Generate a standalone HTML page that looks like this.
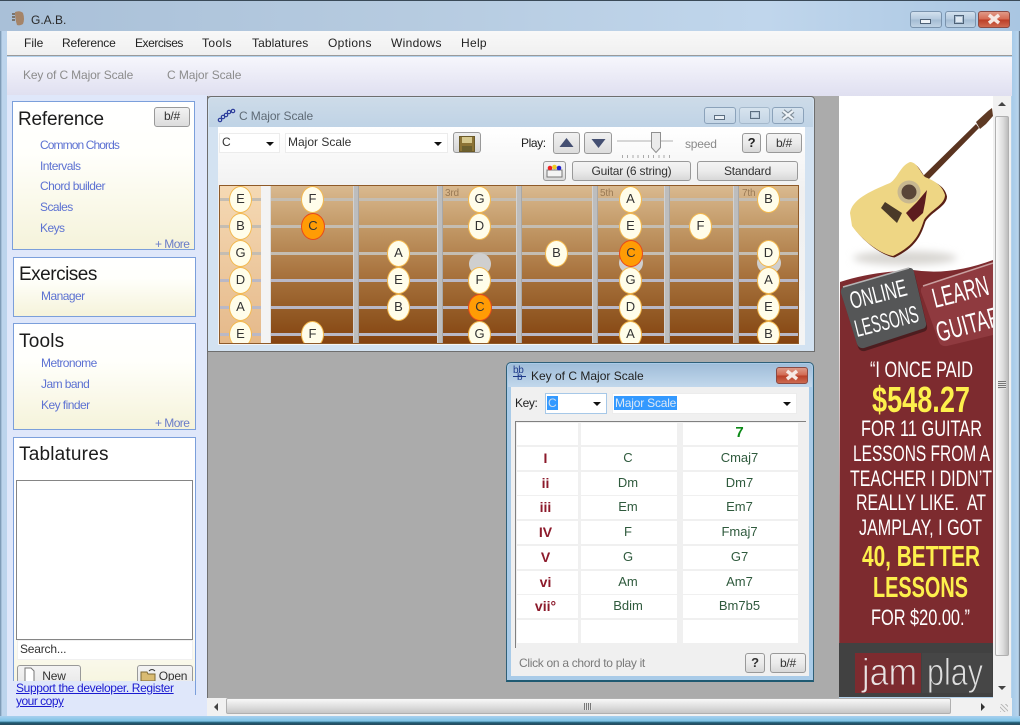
<!DOCTYPE html>
<html><head><meta charset="utf-8"><title>G.A.B.</title>
<style>
html,body{margin:0;padding:0;width:1020px;height:725px;overflow:hidden;background:#b4d2ec}
#w{position:absolute;left:0;top:0;width:1020px;height:725px;overflow:hidden;filter:blur(.3px)}
body,div,span{font-family:"Liberation Sans",sans-serif;font-size:12px;color:#222}
.a{position:absolute;white-space:nowrap;box-sizing:border-box}
.t{position:absolute;white-space:nowrap;line-height:14px;letter-spacing:-.2px}
.panel{position:absolute;box-sizing:border-box;border:1px solid #7b9fdb;background:linear-gradient(#fff 0,#fffffb 35%,#f5f3da 100%)}
.h{position:absolute;white-space:nowrap;font-size:19px;line-height:24px;color:#1c1c1c}
.l{position:absolute;white-space:nowrap;color:#5d72d2;line-height:14px;letter-spacing:-.55px}
.btn{position:absolute;box-sizing:border-box;border:1px solid #999;border-radius:3px;background:linear-gradient(#f3f3f3,#ebebeb 50%,#d8d8d8);text-align:center;color:#333;white-space:nowrap;letter-spacing:-.2px}
.cb{position:absolute;box-sizing:border-box;background:#fff;border:1px solid #ececec;line-height:17px;padding-left:2px;color:#333}
.cb:after{content:"";position:absolute;right:5px;top:8px;border:4px solid transparent;border-top:4px solid #111;border-bottom:0}
.wb{position:absolute;box-sizing:border-box;border:1px solid #7a93ad;border-radius:3px;background:linear-gradient(#d3e1ee,#b5cade 48%,#a4bcd3 52%,#bfd2e4)}
.fb{position:absolute;left:219px;top:185px;width:580px;height:159px;overflow:hidden;border:1px solid #8f5a28;box-sizing:border-box;background:linear-gradient(#d9b98f 0,#c39a68 25%,#a9743f 55%,#8f5520 85%,#85420f 100%)}
.s{position:absolute;left:0;width:579px;height:3px;background:#c4bdb2}
.s2{background:#b9b8c6}
.f{position:absolute;top:0;width:6px;height:157px;background:#bdbdbd;border-left:1px solid #d2d2d2;border-right:1px solid #a8a8a8;box-sizing:border-box}
.n{position:absolute;width:23px;height:27px;border-radius:50%;box-sizing:border-box;border:1.500px solid #f3b94e;background:#fffdea;text-align:center;line-height:24px;font-size:13px;color:#333}
.o{background:#ff9c05;border-color:#e8491a;width:24px}
.d{position:absolute;width:22px;height:22px;border-radius:50%;background:#cfcfcf}
.c{position:absolute;background:#fff;text-align:center;line-height:22px;font-size:13px;color:#2f5a3d;box-sizing:border-box;padding-right:2px}
.r{color:#8c1a2b;font-weight:bold;font-size:14px;padding-right:4px}
</style></head>
<body><div id="w">
<!-- title bar -->
<div class="a" style="left:0;top:0;width:1020px;height:32px;background:linear-gradient(90deg,#a9c0d8 0,#b6cbe0 40%,#c0d6ec 75%,#a9c6e2 100%);border-top:1px solid #3a4a58"></div>
<svg class="a" style="left:11px;top:10px" width="15" height="17" viewBox="0 0 15 17"><path d="M4 2q5-2 8 1q2 6 0 11q-3 2-6 1q-2-6-2-13z" fill="#a58468"/><path d="M1 4h3M1 7h3M1 10h3" stroke="#6a5a4a" stroke-width="1.4"/></svg>
<div class="t" style="left:31px;top:13px;color:#2a2a2a;letter-spacing:0">G.A.B.</div>
<div class="wb" style="left:910px;top:11px;width:32px;height:17px"></div>
<div class="a" style="left:920px;top:19px;width:11px;height:5px;background:#eef3f8;border:1px solid #4e6176"></div>
<div class="wb" style="left:945px;top:11px;width:31px;height:17px"></div>
<div class="a" style="left:954px;top:15px;width:10px;height:9px;background:#dfe8f1;border:1px solid #4e6176;box-shadow:inset 0 0 0 1px #a7bacd"></div>
<div class="wb" style="left:978px;top:11px;width:32px;height:17px;background:linear-gradient(#e09a88,#d66a52 48%,#bb3d26 52%,#cf6a50);border-color:#8a4a44"></div>
<svg class="a" style="left:986px;top:13px" width="16" height="12"><path d="M3 2l10 8M13 2L3 10" stroke="#f6e9e4" stroke-width="3.500"/></svg>
<!-- menu -->
<div class="a" style="left:7px;top:31px;width:1005px;height:25px;background:linear-gradient(#f8f8f8,#f0f0f0);border-bottom:1px solid #9a9a9a"></div>
<div class="t" style="left:24px;top:36px;letter-spacing:0">File</div>
<div class="t" style="left:62px;top:36px">Reference</div>
<div class="t" style="left:135px;top:36px;letter-spacing:-.45px">Exercises</div>
<div class="t" style="left:202px;top:36px;letter-spacing:.4px">Tools</div>
<div class="t" style="left:252px;top:36px;letter-spacing:.1px">Tablatures</div>
<div class="t" style="left:328px;top:36px;letter-spacing:.35px">Options</div>
<div class="t" style="left:391px;top:36px;letter-spacing:.3px">Windows</div>
<div class="t" style="left:461px;top:36px;letter-spacing:.3px">Help</div>
<!-- toolbar & client -->
<div class="a" style="left:7px;top:57px;width:1005px;height:39px;background:linear-gradient(#f6f6fc,#dfdff0)"></div>
<div class="a" style="left:7px;top:95px;width:200px;height:621px;background:#dfe7fa"></div>
<div class="t" style="left:23px;top:68px;color:#8c8c8c;letter-spacing:-.13px">Key of C Major Scale</div>
<div class="t" style="left:167px;top:68px;color:#8c8c8c;letter-spacing:-.08px">C Major Scale</div>
<!-- sidebar -->
<div class="panel" style="left:12px;top:101px;width:183px;height:149px"></div>
<div class="h" style="left:18px;top:108px;letter-spacing:-.2px">Reference</div>
<div class="btn" style="left:154px;top:107px;width:36px;height:20px;line-height:17px;background:linear-gradient(#f2f2f2,#dcdcdc)">b/#</div>
<div class="l" style="left:40px;top:138px;letter-spacing:-.9px">Common Chords</div>
<div class="l" style="left:40px;top:159px">Intervals</div>
<div class="l" style="left:40px;top:179px">Chord builder</div>
<div class="l" style="left:40px;top:200px">Scales</div>
<div class="l" style="left:40px;top:221px">Keys</div>
<div class="l" style="left:155px;top:237px;color:#6a7cc8">+ More</div>

<div class="panel" style="left:13px;top:257px;width:183px;height:60px"></div>
<div class="h" style="left:19px;top:263px;letter-spacing:-.5px">Exercises</div>
<div class="l" style="left:41px;top:289px">Manager</div>

<div class="panel" style="left:13px;top:323px;width:183px;height:107px"></div>
<div class="h" style="left:19px;top:330px;letter-spacing:.2px">Tools</div>
<div class="l" style="left:41px;top:356px">Metronome</div>
<div class="l" style="left:41px;top:377px">Jam band</div>
<div class="l" style="left:41px;top:398px">Key finder</div>
<div class="l" style="left:155px;top:416px;color:#6a7cc8">+ More</div>

<div class="panel" style="left:13px;top:437px;width:183px;height:258px;background:linear-gradient(#fff 0,#fff 70%,#f5f3da 100%)"></div>
<div class="h" style="left:19px;top:443px;letter-spacing:.2px">Tablatures</div>
<div class="a" style="left:16px;top:480px;width:177px;height:160px;background:#fff;border:1px solid #858585"></div>
<div class="a" style="left:17px;top:640px;width:176px;height:20px;background:#fff;border:1px solid #f0f0f0"></div>
<div class="t" style="left:20px;top:642px;color:#333">Search...</div>
<div class="btn" style="left:17px;top:665px;width:64px;height:30px;line-height:20px;padding-left:10px;color:#333">New</div>
<svg class="a" style="left:24px;top:667px" width="12" height="16"><path d="M1 1h6l3 3v11H1z" fill="#fff" stroke="#777"/></svg>
<div class="btn" style="left:137px;top:665px;width:56px;height:30px;line-height:20px;padding-left:16px;color:#333">Open</div>
<svg class="a" style="left:140px;top:667px" width="18" height="15"><path d="M1 5h6l1 2h7v7H1z" fill="#d9bb72" stroke="#7e6a34"/><path d="M9 4q3-3 6 0" stroke="#333" fill="none"/></svg>
<div class="a" style="left:7px;top:681px;width:188px;height:35px;background:#dfe7fa"></div>
<div class="a" style="left:195px;top:681px;width:1px;height:12px;background:#7b9fdb"></div>
<div class="t" style="left:16px;top:681px;color:#1a1ad0;text-decoration:underline;letter-spacing:-.36px">Support the developer. Register</div>
<div class="t" style="left:16px;top:694px;color:#1a1ad0;text-decoration:underline;letter-spacing:-.5px">your copy</div>

<!-- MDI background -->
<div class="a" style="left:207px;top:96px;width:632px;height:602px;background:#ababab;border-left:1px solid #6f6f6f"></div>

<!-- Scale window -->
<div class="a" style="left:207px;top:96px;width:608px;height:256px;background:#d3e2f1;border:1px solid #6e6e6e;border-radius:4px 4px 0 0"></div>
<div class="a" style="left:209px;top:98px;width:604px;height:29px;background:linear-gradient(#cddbe8,#bfd3e6);border-radius:3px 3px 0 0"></div>
<div class="a" style="left:218px;top:127px;width:587px;height:218px;background:linear-gradient(#fff,#f0f0f0 30%,#f4f4f4)"></div>
<svg class="a" style="left:217px;top:107px" width="19" height="16"><g fill="none" stroke="#2a3a9a" stroke-width="1.2"><circle cx="3" cy="13" r="1.7"/><circle cx="6" cy="10" r="1.7"/><circle cx="9" cy="8" r="1.7"/><circle cx="12" cy="5" r="1.7"/><circle cx="16" cy="4" r="1.7"/></g></svg>
<div class="t" style="left:239px;top:109px;color:#5f6b76;letter-spacing:-.1px">C Major Scale</div>
<div class="wb" style="left:704px;top:107px;width:32px;height:17px;background:linear-gradient(#d7e3ee,#c4d5e5);border-color:#8ba2ba"></div>
<div class="a" style="left:714px;top:115px;width:11px;height:5px;border:1px solid #5b6d80;background:#e9eff5"></div>
<div class="wb" style="left:739px;top:107px;width:31px;height:17px;background:linear-gradient(#d7e3ee,#c4d5e5);border-color:#a5b9cc"></div>
<div class="a" style="left:750px;top:111px;width:10px;height:8px;border:1px solid #5b6d80;box-shadow:inset 0 0 0 1px #b9c9d8"></div>
<div class="wb" style="left:772px;top:107px;width:32px;height:17px;background:linear-gradient(#d7e3ee,#c4d5e5);border-color:#8ba2ba"></div>
<svg class="a" style="left:780px;top:109px" width="16" height="12"><path d="M3 2l10 8M13 2L3 10" stroke="#7f8c98" stroke-width="4.500"/><path d="M3 2l10 8M13 2L3 10" stroke="#eef3f7" stroke-width="2.200"/></svg>

<div class="cb" style="left:219px;top:133px;width:61px;height:20px">C</div>
<div class="cb" style="left:285px;top:133px;width:163px;height:20px">Major Scale</div>
<div class="btn" style="left:453px;top:132px;width:28px;height:21px;background:linear-gradient(#eee,#d5d5d5)"></div>
<svg class="a" style="left:459px;top:136px" width="16" height="16"><rect x="0.5" y="0.5" width="15" height="15" fill="#8b7336" stroke="#6b5a28"/><rect x="3" y="1" width="10" height="6" fill="#d6c88e"/><rect x="3" y="10" width="10" height="5" fill="#6b6030"/></svg>
<div class="t" style="left:521px;top:136px;letter-spacing:-.4px">Play:</div>
<div class="btn" style="left:553px;top:132px;width:27px;height:22px;background:linear-gradient(#f0f0f0,#dcdcdc)"></div>
<svg class="a" style="left:558px;top:137px" width="17" height="11"><path d="M1.500 10L8.500 1l7 9z" fill="#444f72"/></svg>
<div class="btn" style="left:584px;top:132px;width:28px;height:22px;background:linear-gradient(#f0f0f0,#dcdcdc)"></div>
<svg class="a" style="left:590px;top:138px" width="17" height="11"><path d="M1.500 1L8.500 10l7-9z" fill="#444f72"/></svg>
<div class="a" style="left:617px;top:140px;width:56px;height:2px;background:#d6d6d6"></div>
<svg class="a" style="left:651px;top:132px" width="11" height="22"><path d="M.5.500h9v15l-4.500 5-4.500-5z" fill="#ebebeb" stroke="#909090"/></svg>
<div class="a" style="left:622px;top:155px;width:48px;height:3px;background:repeating-linear-gradient(90deg,#aaa 0,#aaa 1px,transparent 1px,transparent 5.200px)"></div>
<div class="t" style="left:685px;top:137px;color:#8a8a8a">speed</div>
<div class="btn" style="left:742px;top:133px;width:19px;height:20px;line-height:18px;font-weight:bold;font-size:13px;color:#222">?</div>
<div class="btn" style="left:766px;top:133px;width:36px;height:20px;line-height:18px">b/#</div>
<div class="btn" style="left:543px;top:161px;width:23px;height:20px"></div>
<svg class="a" style="left:545px;top:163px" width="19" height="16"><rect x="2" y="7" width="15" height="7" fill="#f4f4f4" stroke="#777"/><circle cx="5" cy="5" r="2.300" fill="#e22"/><circle cx="9.500" cy="4" r="2.300" fill="#ec2"/><circle cx="14" cy="5" r="2.300" fill="#22c"/></svg>
<div class="btn" style="left:572px;top:161px;width:119px;height:20px;line-height:18px">Guitar (6 string)</div>
<div class="btn" style="left:697px;top:161px;width:101px;height:20px;line-height:18px">Standard</div>

<div class="fb">
<div class="a" style="left:0;top:0;width:41px;height:157px;background:linear-gradient(#f5d9b4,#e5b98a)"></div>
<div class="s" style="top:12px"></div><div class="s" style="top:39px"></div><div class="s" style="top:66px"></div>
<div class="s s2" style="top:93px"></div><div class="s s2" style="top:120px"></div><div class="s s2" style="top:147px"></div>
<div class="a" style="left:41px;top:0;width:10px;height:157px;background:#f3f3f3;border-right:1px solid #ddd"></div>
<div class="f" style="left:133px"></div><div class="f" style="left:217px"></div><div class="f" style="left:296px"></div>
<div class="f" style="left:372px"></div><div class="f" style="left:444px"></div><div class="f" style="left:513px"></div>
<div class="t" style="left:225px;top:1px;color:#9a7a55;font-size:10px">3rd</div>
<div class="t" style="left:380px;top:1px;color:#9a7a55;font-size:10px">5th</div>
<div class="t" style="left:522px;top:1px;color:#9a7a55;font-size:10px">7th</div>
<div class="d" style="left:249px;top:67px"></div>
<div class="d" style="left:399px;top:66px;width:24px"></div>
<div class="d" style="left:537px;top:66px;width:24px"></div>
<div class="n" style="left:9px;top:0">E</div><div class="n" style="left:9px;top:27px">B</div><div class="n" style="left:9px;top:54px">G</div><div class="n" style="left:9px;top:81px">D</div><div class="n" style="left:9px;top:108px">A</div><div class="n" style="left:9px;top:135px">E</div>
<div class="n" style="left:81px;top:0">F</div><div class="n o" style="left:81px;top:27px">C</div><div class="n" style="left:81px;top:135px">F</div>
<div class="n" style="left:167px;top:54px">A</div><div class="n" style="left:167px;top:81px">E</div><div class="n" style="left:167px;top:108px">B</div>
<div class="n" style="left:248px;top:0">G</div><div class="n" style="left:248px;top:27px">D</div><div class="n" style="left:248px;top:81px">F</div><div class="n o" style="left:248px;top:108px">C</div><div class="n" style="left:248px;top:135px">G</div>
<div class="n" style="left:325px;top:54px">B</div>
<div class="n" style="left:399px;top:0">A</div><div class="n" style="left:399px;top:27px">E</div><div class="n o" style="left:399px;top:54px">C</div><div class="n" style="left:399px;top:81px">G</div><div class="n" style="left:399px;top:108px">D</div><div class="n" style="left:399px;top:135px">A</div>
<div class="n" style="left:469px;top:27px">F</div>
<div class="n" style="left:537px;top:0">B</div><div class="n" style="left:537px;top:54px">D</div><div class="n" style="left:537px;top:81px">A</div><div class="n" style="left:537px;top:108px">E</div><div class="n" style="left:537px;top:135px">B</div>
</div>

<!-- Key window -->
<div class="a" style="left:506px;top:362px;width:308px;height:320px;background:#a9cbe8;border:1px solid #2f5f78;border-radius:5px 5px 0 0;border-bottom:2px solid #1f5a72"></div>
<div class="a" style="left:508px;top:364px;width:304px;height:23px;background:linear-gradient(#a0bdd9,#c2d8ec);border-radius:4px 4px 0 0"></div>
<div class="a" style="left:511px;top:387px;width:298px;height:289px;background:#f0f0f0"></div>
<div class="t" style="left:513px;top:365px;color:#1f3a8a;font-size:10px;line-height:11px;letter-spacing:-.3px">bb</div>
<div class="a" style="left:513px;top:376px;width:13px;height:1px;background:#1f3a8a"></div>
<div class="t" style="left:517px;top:372px;color:#1f3a8a;font-size:10px;line-height:11px">b</div>
<div class="t" style="left:531px;top:369px;color:#222;letter-spacing:0">Key of C Major Scale</div>
<div class="wb" style="left:776px;top:367px;width:32px;height:17px;background:linear-gradient(#dd9a88,#d26a52 48%,#b93f28 52%,#cc6a50);border-color:#8a4a44"></div>
<svg class="a" style="left:784px;top:369px" width="16" height="12"><path d="M3 2l10 8M13 2L3 10" stroke="#f6e9e4" stroke-width="3.500"/></svg>
<div class="t" style="left:515px;top:396px;letter-spacing:-.4px">Key:</div>
<div class="cb" style="left:545px;top:393px;width:62px;height:21px;border-color:#a6c8e8;line-height:18px;padding-left:1px;padding-top:0"><span style="background:#3399ff;color:#cde;padding:0 1px">C</span></div>
<div class="cb" style="left:612px;top:393px;width:185px;height:21px;line-height:18px;padding-left:1px"><span style="background:#3399ff;color:#dce8f5;padding:0 1px;letter-spacing:-.2px">Major Scale</span></div>
<div class="a" style="left:515px;top:421px;width:291px;height:227px;background:#f0f0f0;border-top:1px solid #808080;border-left:1px solid #808080"></div>
<div class="c" style="left:517px;top:423px;width:61px;height:22px"></div><div class="c" style="left:581px;top:423px;width:96px;height:22px"></div><div class="c" style="left:683px;top:423px;width:115px;height:22px;color:#0c8a18;font-weight:bold;font-size:15px;line-height:20px">7</div>
<div class="c r" style="left:517px;top:447px;width:61px;height:23px">I</div><div class="c" style="left:581px;top:447px;width:96px;height:23px">C</div><div class="c" style="left:683px;top:447px;width:115px;height:23px">Cmaj7</div>
<div class="c r" style="left:517px;top:472px;width:61px;height:23px">ii</div><div class="c" style="left:581px;top:472px;width:96px;height:23px">Dm</div><div class="c" style="left:683px;top:472px;width:115px;height:23px">Dm7</div>
<div class="c r" style="left:517px;top:496px;width:61px;height:23px">iii</div><div class="c" style="left:581px;top:496px;width:96px;height:23px">Em</div><div class="c" style="left:683px;top:496px;width:115px;height:23px">Em7</div>
<div class="c r" style="left:517px;top:521px;width:61px;height:23px">IV</div><div class="c" style="left:581px;top:521px;width:96px;height:23px">F</div><div class="c" style="left:683px;top:521px;width:115px;height:23px">Fmaj7</div>
<div class="c r" style="left:517px;top:546px;width:61px;height:23px">V</div><div class="c" style="left:581px;top:546px;width:96px;height:23px">G</div><div class="c" style="left:683px;top:546px;width:115px;height:23px">G7</div>
<div class="c r" style="left:517px;top:571px;width:61px;height:23px">vi</div><div class="c" style="left:581px;top:571px;width:96px;height:23px">Am</div><div class="c" style="left:683px;top:571px;width:115px;height:23px">Am7</div>
<div class="c r" style="left:517px;top:595px;width:61px;height:23px">vii°</div><div class="c" style="left:581px;top:595px;width:96px;height:23px">Bdim</div><div class="c" style="left:683px;top:595px;width:115px;height:23px">Bm7b5</div>
<div class="c" style="left:517px;top:620px;width:61px;height:23px"></div><div class="c" style="left:581px;top:620px;width:96px;height:23px"></div><div class="c" style="left:683px;top:620px;width:115px;height:23px"></div>
<div class="t" style="left:519px;top:656px;color:#7a7a7a;letter-spacing:-.3px">Click on a chord to play it</div>
<div class="btn" style="left:745px;top:653px;width:20px;height:20px;line-height:18px;font-weight:bold;font-size:13px">?</div>
<div class="btn" style="left:770px;top:653px;width:36px;height:20px;line-height:18px">b/#</div>

<!-- Ad -->
<svg class="a" style="left:839px;top:96px" width="154" height="601" viewBox="839 96 154 601">
<defs><filter id="b" x="-20%" y="-100%" width="140%" height="300%"><feGaussianBlur stdDeviation="4"/></filter></defs>
<rect x="839" y="96" width="154" height="601" fill="#fff"/>
<ellipse cx="905" cy="258" rx="52" ry="7" fill="#d8d6d2" filter="url(#b)"/>
<path d="M840 282Q870 272 913 270Q950 276 993 260V697H839Z" fill="#7d2b2f"/>
<path d="M923 176L976 124L979 128L927 181Z" fill="#5a3420"/>
<path d="M976 122L988 111L992 108L993 116L986 124L980 129Z" fill="#5e3a24"/>
<path d="M851.500 214.500C853.500 201.500 869.500 193.500 891.500 184.500C899.500 179.500 901.500 167.500 911.500 163.500C918.500 163.500 921.500 173.500 926.500 178.500C933.500 181.500 945 185.500 947 196.500C947 206.500 931.500 211.500 925.500 221.500C921.500 233.500 917.500 246.500 894.500 257.500C881.500 255.500 863.500 241.500 853.500 227.500Z" fill="#5a2015"/>
<path d="M850 213C852 200 868 192 890 183C898 178 900 166 910 162C917 162 920 172 925 177C932 180 942 184 945 195C945 205 930 210 924 220C920 232 916 245 893 256C880 254 862 240 852 226Z" fill="#eed684"/>
<path d="M906 213L917 202L927 190L925 203L923 213L913 222Z" fill="#5c1c1e"/>
<circle cx="909" cy="192" r="11.500" fill="#c8b890"/><circle cx="909" cy="192" r="7.500" fill="#5a4638"/>
<path d="M881 208L885 202L902 213L897 223Z" fill="#4a3a28"/>
<path d="M845 286L908 268Q913 267 914 272L926 323Q927 328 922 329L864 348Q859 349 857 344L841 293Q840 288 845 286Z" fill="#2d1416" transform="translate(1 3)" opacity=".6"/>
<path d="M845 286L908 268Q913 267 914 272L926 323Q927 328 922 329L864 348Q859 349 857 344L841 293Q840 288 845 286Z" fill="#555657"/>
<path d="M843 287L909 268" stroke="#b5b5b5" stroke-width="1.500" fill="none"/>
<path d="M925 285L993 263V335L947 346Q941 347 939 342L921 292Q920 287 925 285Z" fill="#8f3a3f"/>
<path d="M923 286L993 263" stroke="#c9a0a0" stroke-width="1.500" fill="none"/>
<g font-family="'Liberation Sans Narrow','Liberation Sans',sans-serif" fill="#fff" font-size="24">
<text transform="translate(852 309) rotate(-14)" textLength="58" lengthAdjust="spacingAndGlyphs" font-size="24">ONLINE</text>
<text transform="translate(857 337) rotate(-14)" textLength="65" lengthAdjust="spacingAndGlyphs" font-size="24">LESSONS</text>
<text transform="translate(935 308) rotate(-14)" textLength="57" lengthAdjust="spacingAndGlyphs" font-size="28">LEARN</text>
<text transform="translate(939 342) rotate(-15)" textLength="66" lengthAdjust="spacingAndGlyphs" font-size="28">GUITAR</text>
<text x="870" y="377" textLength="103" lengthAdjust="spacingAndGlyphs" font-size="22">“I ONCE PAID</text>
<text x="872" y="412" textLength="98" lengthAdjust="spacingAndGlyphs" font-size="36" font-weight="bold" fill="#fdf04c">$548.27</text>
<text x="861" y="436" textLength="121" lengthAdjust="spacingAndGlyphs" font-size="22">FOR 11 GUITAR</text>
<text x="853" y="461" textLength="137" lengthAdjust="spacingAndGlyphs" font-size="22">LESSONS FROM A</text>
<text x="850" y="486" textLength="142" lengthAdjust="spacingAndGlyphs" font-size="22">TEACHER I DIDN’T</text>
<text x="856" y="510" textLength="130" lengthAdjust="spacingAndGlyphs" font-size="22" xml:space="preserve">REALLY LIKE.  AT</text>
<text x="859" y="535" textLength="123" lengthAdjust="spacingAndGlyphs" font-size="22">JAMPLAY, I GOT</text>
<text x="862" y="566" textLength="118" lengthAdjust="spacingAndGlyphs" font-size="29" font-weight="bold" fill="#fdf04c">40, BETTER</text>
<text x="873" y="597" textLength="95" lengthAdjust="spacingAndGlyphs" font-size="29" font-weight="bold" fill="#fdf04c">LESSONS</text>
<text x="871" y="625" textLength="99" lengthAdjust="spacingAndGlyphs" font-size="22">FOR $20.00.”</text>
</g>
<rect x="839" y="643" width="154" height="54" fill="#414141"/>
<rect x="855" y="653" width="66" height="40" fill="#7d2b2f"/>
<rect x="922" y="653" width="70" height="40" fill="#464646"/>
<text x="862" y="685" textLength="55" lengthAdjust="spacingAndGlyphs" font-size="38" fill="#e8e2e2" stroke="#7d2b2f" stroke-width=".9" font-family="'Liberation Sans',sans-serif">jam</text>
<text x="927" y="685" textLength="56" lengthAdjust="spacingAndGlyphs" font-size="38" fill="#dedede" stroke="#464646" stroke-width=".9" font-family="'Liberation Sans',sans-serif">play</text>
</svg>

<!-- scrollbars -->
<div class="a" style="left:993px;top:96px;width:18px;height:602px;background:#f1f1f1"></div>
<svg class="a" style="left:998px;top:101px" width="9" height="6"><path d="M0 5l4-4 4 4z" fill="#444"/></svg>
<div class="a" style="left:995px;top:116px;width:14px;height:540px;background:linear-gradient(90deg,#fafafa,#dcdcdc 60%,#bcbcbc);border:1px solid #b0b0b0;border-radius:2px"></div>
<div class="a" style="left:998px;top:381px;width:8px;height:8px;background:repeating-linear-gradient(#777 0,#777 1px,#e4e4e4 1px,#e4e4e4 2px)"></div>
<svg class="a" style="left:998px;top:685px" width="9" height="6"><path d="M0 1l4 4 4-4z" fill="#444"/></svg>
<div class="a" style="left:207px;top:698px;width:805px;height:18px;background:#f1f1f1"></div>
<svg class="a" style="left:213px;top:703px" width="6" height="9"><path d="M5 0L1 4l4 4z" fill="#444"/></svg>
<div class="a" style="left:226px;top:698px;width:725px;height:16px;background:linear-gradient(#f8f8f8,#dedede 55%,#c6c6c6);border:1px solid #b0b0b0;border-radius:2px"></div>
<div class="a" style="left:584px;top:703px;width:8px;height:7px;background:repeating-linear-gradient(90deg,#777 0,#777 1px,#e4e4e4 1px,#e4e4e4 2px)"></div>
<svg class="a" style="left:980px;top:703px" width="6" height="9"><path d="M1 0l4 4-4 4z" fill="#333"/></svg>
<div class="a" style="left:1000px;top:704px;width:8px;height:8px;background:repeating-linear-gradient(45deg,#bbb 0,#bbb 1px,transparent 1px,transparent 3px)"></div>
<!-- frame -->
<div class="a" style="left:0;top:31px;width:7px;height:694px;background:linear-gradient(90deg,#6c8aa6,#bcd4ec 30%)"></div>
<div class="a" style="left:1012px;top:31px;width:8px;height:694px;background:linear-gradient(90deg,#a7cbe9,#b8d4ec 80%,#456)"></div>
<div class="a" style="left:0;top:716px;width:1020px;height:9px;background:linear-gradient(#a8cfee,#7fc4e6 55%,#1e5a72 75%,#2a4a5c)"></div>
</div></body></html>
